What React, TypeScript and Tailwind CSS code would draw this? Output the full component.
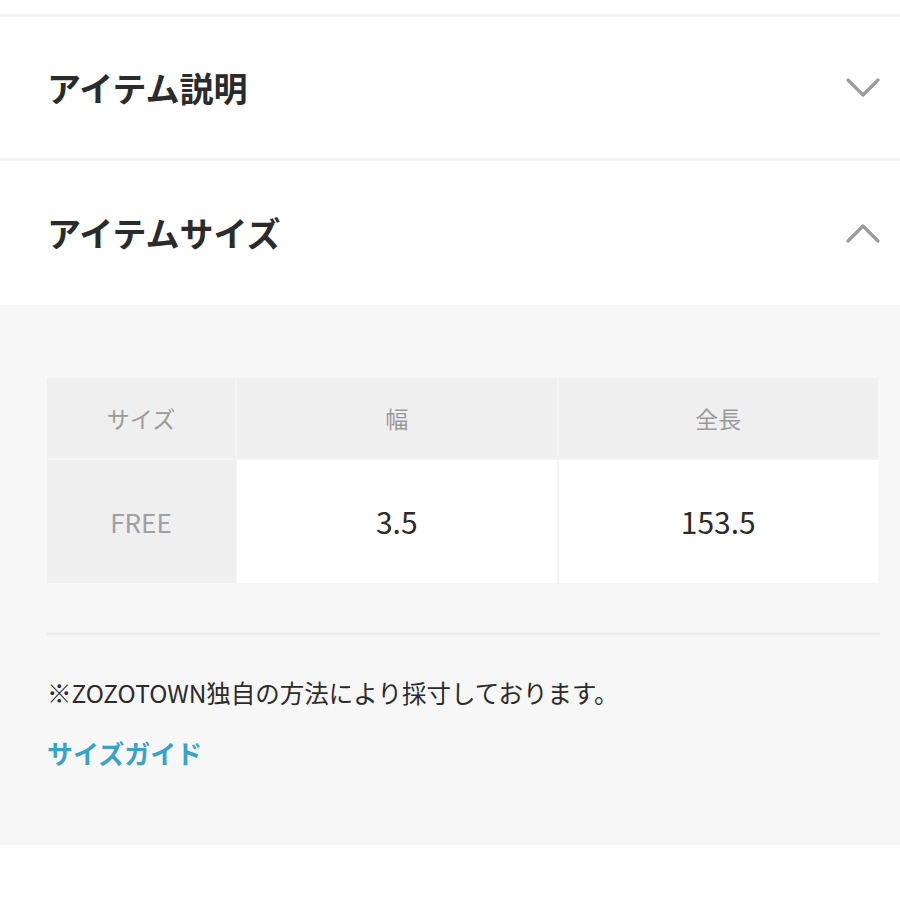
import React from 'react';

const font = { fontFamily: '"Noto Sans CJK JP", "Noto Sans", sans-serif' };

const Chevron: React.FC<{ up?: boolean }> = ({ up }) => (
  <svg width="36" height="22" viewBox="0 0 36 22" fill="none" stroke="#9b9b9b" strokeWidth="3.2" strokeLinecap="round" strokeLinejoin="round">
    {up ? <path d="M3 19 L18 4 L33 19" /> : <path d="M3 3 L18 18 L33 3" />}
  </svg>
);

const Section: React.FC<{ title: string; open?: boolean; h: string }> = ({ title, open, h }) => (
  <div className={`flex items-center justify-between pl-[47px] pr-[19px] bg-white ${h}`}>
    <h2 className="text-[34px] font-bold text-[#2b2b2b] leading-none">{title}</h2>
    <Chevron up={open} />
  </div>
);

export default function App() {
  return (
    <div className="w-[900px] h-[900px] bg-white overflow-hidden" style={font}>
      <div className="h-[14px] bg-white" />
      <div className="h-[3px] bg-[#f3f3f3]" />
      <Section title="アイテム説明" h="h-[141px]" />
      <div className="h-[3px] bg-[#f3f3f3]" />
      <Section title="アイテムサイズ" open h="h-[144px]" />

      <div className="bg-[#f7f7f7] h-[540px] pl-[47px] pr-[20px] pt-[73px]">
        <div className="mr-[2px] grid grid-cols-[188px_1fr_1fr] grid-rows-[80px_123px] gap-[2px] bg-[#f3f3f3]">
          <div className="bg-[#efefef] flex items-center justify-center text-[23px] text-[#9a9a9a]">サイズ</div>
          <div className="bg-[#efefef] flex items-center justify-center text-[23px] text-[#9a9a9a]">幅</div>
          <div className="bg-[#efefef] flex items-center justify-center text-[23px] text-[#9a9a9a]">全長</div>
          <div className="bg-[#efefef] flex items-center justify-center text-[26px] text-[#a0a0a0]">FREE</div>
          <div className="bg-white flex items-center justify-center text-[30px] text-[#2b2b2b]">3.5</div>
          <div className="bg-white flex items-center justify-center text-[30px] text-[#2b2b2b]">153.5</div>
        </div>

        <div className="mt-[50px] h-[2px] bg-[#ebebeb]" />

        <p className="mt-[42px] text-[24.5px] leading-[32px] text-[#2b2b2b]">※ZOZOTOWN独自の方法により採寸しております。</p>

        <a className="block mt-[28px] text-[26px] leading-[32px] font-bold text-[#3aa2c6]">サイズガイド</a>
      </div>
    </div>
  );
}
